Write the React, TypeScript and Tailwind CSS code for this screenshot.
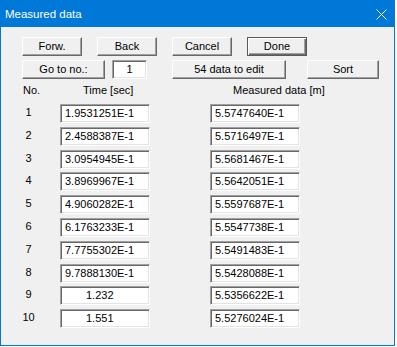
import React from "react";

const btnBase =
  "h-[19px] flex items-center justify-center bg-[#f0f0f0] text-[11px] text-black leading-none border border-t-white border-l-white border-b-[#696969] border-r-[#696969] shadow-[inset_-1px_-1px_0_#a0a0a0]";
const btnDefault =
  "h-[19px] flex items-center justify-center bg-[#f0f0f0] text-[11px] text-black leading-none border border-[#5a5a5a] shadow-[inset_1px_1px_0_#ffffff,inset_-1px_-1px_0_#696969,inset_-2px_-2px_0_#a0a0a0]";
const inputBase =
  "h-[19px] bg-white text-[11px] text-black leading-none flex items-center border border-t-[#a0a0a0] border-l-[#a0a0a0] border-b-white border-r-white shadow-[inset_1px_1px_0_#696969,inset_-1px_-1px_0_#e3e3e3]";

const rows: [string, string, string][] = [
  ["1", "1.9531251E-1", "5.5747640E-1"],
  ["2", "2.4588387E-1", "5.5716497E-1"],
  ["3", "3.0954945E-1", "5.5681467E-1"],
  ["4", "3.8969967E-1", "5.5642051E-1"],
  ["5", "4.9060282E-1", "5.5597687E-1"],
  ["6", "6.1763233E-1", "5.5547738E-1"],
  ["7", "7.7755302E-1", "5.5491483E-1"],
  ["8", "9.7888130E-1", "5.5428088E-1"],
  ["9", "1.232", "5.5356622E-1"],
  ["10", "1.551", "5.5276024E-1"],
];

export default function App() {
  return (
    <div className="w-[397px] h-[347px] bg-white font-['Liberation_Sans',Arial,sans-serif]">
      <div className="w-[395px] h-[346px] flex flex-col border border-[#0078d7] bg-[#f0f0f0]">
        {/* Title bar */}
        <div className="h-[26px] bg-[#0078d7] flex items-center justify-between pl-[4px] pr-[7px] shrink-0">
          <span className="text-white text-[11.5px] leading-none mt-[1px]">Measured data</span>
          <svg width="11" height="11" viewBox="0 0 11 11" className="mt-[1px]">
            <path d="M0.5 0.5 L10.5 10.5 M10.5 0.5 L0.5 10.5" stroke="white" strokeWidth="1" fill="none" />
          </svg>
        </div>
        {/* Body */}
        <div className="flex flex-col pl-[21px] pt-[10px]">
          <div className="flex gap-[15px]">
            <div className={`${btnBase} w-[60px]`}>Forw.</div>
            <div className={`${btnBase} w-[60px]`}>Back</div>
            <div className={`${btnBase} w-[60px]`}>Cancel</div>
            <div className={`${btnDefault} w-[60px]`}>Done</div>
          </div>
          <div className="flex mt-[4px]">
            <div className={`${btnBase} w-[83px]`}>Go to no.:</div>
            <div className={`${inputBase} w-[35px] ml-[7px] justify-center`}>1</div>
            <div className={`${btnBase} w-[114px] ml-[25px]`}>54 data to edit</div>
            <div className={`${btnBase} w-[72px] ml-[21px]`}>Sort</div>
          </div>
          <div className="flex mt-[5px] h-[13px] items-center text-[11px] leading-none text-black">
            <span className="w-[61px] pl-[1px]">No.</span>
            <span className="w-[150px]">Time [sec]</span>
            <span>Measured data [m]</span>
          </div>
          <div className="flex flex-col mt-[7px] gap-[3.8px]">
            {rows.map(([n, t, m]) => (
              <div key={n} className="flex items-center h-[19px]">
                <span className="w-[13px] text-center text-[11px] leading-none text-black -mt-[2px]">{n}</span>
                <div
                  className={`${inputBase} w-[90px] ml-[25px] ${
                    t.includes("E") ? "pl-[4px]" : "pl-[25px]"
                  }`}
                >
                  {t}
                </div>
                <div className={`${inputBase} w-[90px] ml-[60px] pl-[4px]`}>{m}</div>
              </div>
            ))}
          </div>
        </div>
      </div>
    </div>
  );
}
